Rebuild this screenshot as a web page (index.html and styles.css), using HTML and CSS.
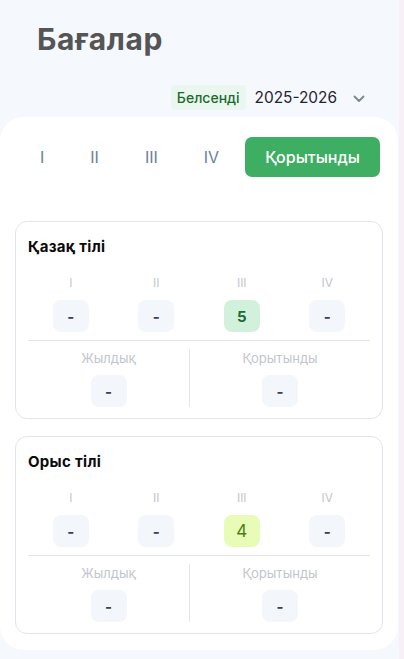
FILE: index.html
```html
<!DOCTYPE html>
<html lang="kk">
<head>
<meta charset="utf-8">
<title>Бағалар</title>
<link rel="stylesheet" href="styles.css">
</head>
<body>
<div class="layout">
  <main class="main">
    <h1 class="title">Бағалар</h1>
    <div class="year-row">
      <span class="badge">Белсенді</span>
      <span class="year">2025-2026</span>
      <svg class="chevron" width="12" height="8" viewBox="0 0 12 8"><path d="M1.5 1.5 L6 6 L10.5 1.5" fill="none" stroke="#7b8494" stroke-width="1.8" stroke-linecap="round" stroke-linejoin="round"/></svg>
    </div>
    <section class="panel">
      <div class="tabs">
        <span class="tab">I</span>
        <span class="tab">II</span>
        <span class="tab">III</span>
        <span class="tab">IV</span>
        <span class="tab tab-active">Қорытынды</span>
      </div>

      <div class="card">
        <div class="card-title">Қазақ тілі</div>
        <div class="quarters">
          <div class="q"><span class="q-label">I</span><span class="box">-</span></div>
          <div class="q"><span class="q-label">II</span><span class="box">-</span></div>
          <div class="q"><span class="q-label">III</span><span class="box box-5">5</span></div>
          <div class="q"><span class="q-label">IV</span><span class="box">-</span></div>
        </div>
        <div class="totals">
          <div class="t"><span class="t-label">Жылдық</span><span class="box">-</span></div>
          <div class="t t-right"><span class="t-label">Қорытынды</span><span class="box">-</span></div>
        </div>
      </div>

      <div class="card">
        <div class="card-title">Орыс тілі</div>
        <div class="quarters">
          <div class="q"><span class="q-label">I</span><span class="box">-</span></div>
          <div class="q"><span class="q-label">II</span><span class="box">-</span></div>
          <div class="q"><span class="q-label">III</span><span class="box box-4">4</span></div>
          <div class="q"><span class="q-label">IV</span><span class="box">-</span></div>
        </div>
        <div class="totals">
          <div class="t"><span class="t-label">Жылдық</span><span class="box">-</span></div>
          <div class="t t-right"><span class="t-label">Қорытынды</span><span class="box">-</span></div>
        </div>
      </div>
    </section>
  </main>
  <div class="strip"></div>
</div>
</body>
</html>
```

FILE: styles.css
```css
* { box-sizing: border-box; }
html, body { margin: 0; padding: 0; }
body {
  background: #f5f8fc;
  font-family: Inter, "Noto Sans", "DejaVu Sans", sans-serif;
  width: 404px;
  height: 659px;
  overflow: hidden;
}
.layout {
  display: flex;
  height: 659px;
}
.main {
  width: 399px;
  flex: none;
  display: flex;
  flex-direction: column;
}
.strip {
  flex: 1;
  background: #f8f0f7;
}
.title {
  margin: 0;
  padding: 21px 0 0 37px;
  font-size: 30px;
  line-height: 36px;
  font-weight: 700;
  letter-spacing: 0.6px;
  color: #555555;
}
.year-row {
  display: flex;
  align-items: center;
  justify-content: flex-end;
  margin-top: 28px;
  padding-right: 34px;
  height: 25px;
}
.badge {
  background: #eaf7ee;
  color: #1d6a31;
  font-size: 14px;
  font-weight: 500;
  line-height: 25px;
  padding: 0 6px;
  border-radius: 4px;
}
.year {
  margin-left: 9px;
  font-size: 15.4px;
  color: #1f2433;
}
.chevron {
  margin-left: 16px;
  margin-top: 2px;
}
.panel {
  margin-top: 7px;
  width: 398px;
  background: #ffffff;
  border-radius: 24px;
  padding: 20px 15px 16px;
}
.tabs {
  display: flex;
  align-items: center;
  gap: 6px;
  margin: 0 4px 0 5px;
}
.tab {
  padding: 0 20px;
  font-size: 16px;
  color: #6a7e9c;
  line-height: 40px;
}
.tab-active {
  background: #3dae62;
  color: #ffffff;
  font-size: 16px;
  font-weight: 500;
  border-radius: 7px;
  margin-left: auto;
}
.card {
  margin-top: 44px;
  border: 1px solid #e1e4e9;
  border-radius: 12px;
  padding: 15px 12px 11px 12px;
}
.card + .card { margin-top: 17px; }
.card-title {
  font-size: 15px;
  line-height: 20px;
  font-weight: 700;
  letter-spacing: 0.3px;
  color: #0b0b0b;
  margin-bottom: 18px;
}
.quarters {
  display: grid;
  grid-template-columns: repeat(4, 1fr);
  border-bottom: 1px solid #e3e6ea;
  padding-bottom: 8px;
}
.q, .t {
  display: flex;
  flex-direction: column;
  align-items: center;
}
.q-label {
  font-size: 12px;
  line-height: 16px;
  color: #c2c6cc;
  margin-bottom: 9px;
}
.box {
  width: 36px;
  height: 32px;
  border-radius: 8px;
  background: #f3f6fa;
  display: flex;
  align-items: center;
  justify-content: center;
  font-size: 15px;
  font-weight: 700;
  color: #3c4350;
}
.box-5 {
  background: #d2f1dc;
  color: #1f6b36;
}
.box-4 {
  background: #e8fcb8;
  color: #4f7d12;
  font-weight: 400;
  font-size: 17px;
}
.totals {
  display: grid;
  grid-template-columns: 161px 1fr;
  margin-top: 8px;
}
.t-right {
  border-left: 1px solid #e3e6ea;
}
.t-label {
  font-size: 13px;
  line-height: 16px;
  color: #c2c6cc;
  margin-top: 1px;
  margin-bottom: 9px;
}
```
